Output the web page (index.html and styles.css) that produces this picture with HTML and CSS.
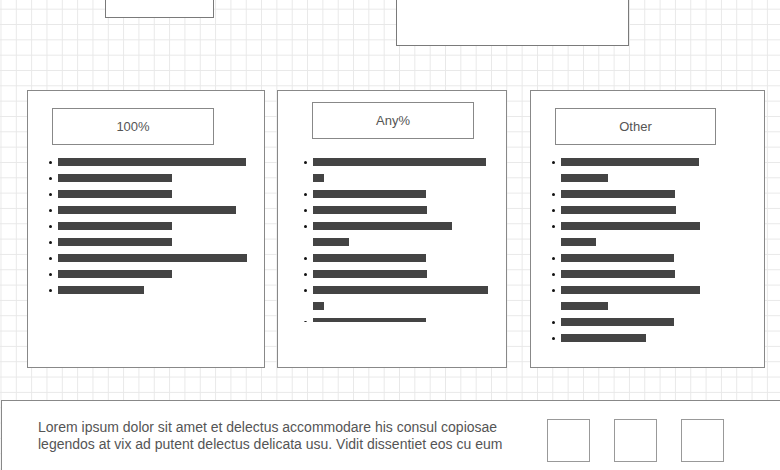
FILE: index.html
```html
<!DOCTYPE html>
<html lang="en">
<head>
<meta charset="utf-8">
<title>Wireframe</title>
<link rel="stylesheet" href="styles.css">
</head>
<body>
<div class="page">
  <div class="top-row">
    <div class="node node-a"></div>
    <div class="node node-b"></div>
  </div>

  <div class="cards">
    <section class="card card-1">
      <div class="card-title">100%</div>
      <ul class="bars">
        <li class="item"><span class="dot"></span><div class="lines"><span class="bar" style="width:188px"></span></div></li>
        <li class="item"><span class="dot"></span><div class="lines"><span class="bar" style="width:114px"></span></div></li>
        <li class="item"><span class="dot"></span><div class="lines"><span class="bar" style="width:114px"></span></div></li>
        <li class="item"><span class="dot"></span><div class="lines"><span class="bar" style="width:178px"></span></div></li>
        <li class="item"><span class="dot"></span><div class="lines"><span class="bar" style="width:114px"></span></div></li>
        <li class="item"><span class="dot"></span><div class="lines"><span class="bar" style="width:114px"></span></div></li>
        <li class="item"><span class="dot"></span><div class="lines"><span class="bar" style="width:189px"></span></div></li>
        <li class="item"><span class="dot"></span><div class="lines"><span class="bar" style="width:114px"></span></div></li>
        <li class="item"><span class="dot"></span><div class="lines"><span class="bar" style="width:86px"></span></div></li>
      </ul>
    </section>

    <section class="card card-2">
      <div class="card-title">Any%</div>
      <ul class="bars">
        <li class="item"><span class="dot"></span><div class="lines"><span class="bar" style="width:173px"></span><span class="bar" style="width:11px"></span></div></li>
        <li class="item"><span class="dot"></span><div class="lines"><span class="bar" style="width:113px"></span></div></li>
        <li class="item"><span class="dot"></span><div class="lines"><span class="bar" style="width:114px"></span></div></li>
        <li class="item"><span class="dot"></span><div class="lines"><span class="bar" style="width:139px"></span><span class="bar" style="width:36px"></span></div></li>
        <li class="item"><span class="dot"></span><div class="lines"><span class="bar" style="width:113px"></span></div></li>
        <li class="item"><span class="dot"></span><div class="lines"><span class="bar" style="width:114px"></span></div></li>
        <li class="item"><span class="dot"></span><div class="lines"><span class="bar" style="width:175px"></span><span class="bar" style="width:11px"></span></div></li>
        <li class="item"><span class="dot"></span><div class="lines"><span class="bar" style="width:113px"></span></div></li>
      </ul>
    </section>

    <section class="card card-3">
      <div class="card-title">Other</div>
      <ul class="bars">
        <li class="item"><span class="dot"></span><div class="lines"><span class="bar" style="width:138px"></span><span class="bar" style="width:47px"></span></div></li>
        <li class="item"><span class="dot"></span><div class="lines"><span class="bar" style="width:114px"></span></div></li>
        <li class="item"><span class="dot"></span><div class="lines"><span class="bar" style="width:115px"></span></div></li>
        <li class="item"><span class="dot"></span><div class="lines"><span class="bar" style="width:139px"></span><span class="bar" style="width:35px"></span></div></li>
        <li class="item"><span class="dot"></span><div class="lines"><span class="bar" style="width:113px"></span></div></li>
        <li class="item"><span class="dot"></span><div class="lines"><span class="bar" style="width:114px"></span></div></li>
        <li class="item"><span class="dot"></span><div class="lines"><span class="bar" style="width:139px"></span><span class="bar" style="width:47px"></span></div></li>
        <li class="item"><span class="dot"></span><div class="lines"><span class="bar" style="width:113px"></span></div></li>
        <li class="item"><span class="dot"></span><div class="lines"><span class="bar" style="width:85px"></span></div></li>
      </ul>
    </section>
  </div>

  <footer class="footer">
    <p class="footer-text">Lorem ipsum dolor sit amet et delectus accommodare his consul copiosae legendos at vix ad putent delectus delicata usu. Vidit dissentiet eos cu eum</p>
    <div class="squares">
      <div class="square"></div>
      <div class="square"></div>
      <div class="square"></div>
    </div>
  </footer>
</div>
</body>
</html>
```

FILE: styles.css
```css
* {
  box-sizing: border-box;
}

html, body {
  margin: 0;
  padding: 0;
}

body {
  width: 780px;
  height: 470px;
  overflow: hidden;
  font-family: "Liberation Sans", Arial, sans-serif;
  color: #555;
  background-color: #fff;
  background-image:
    linear-gradient(to right, #e8e8e8 1px, transparent 1px),
    linear-gradient(to bottom, #e8e8e8 1px, transparent 1px);
  background-size: 15.33px 15.33px;
  background-position: 0.5px 8.7px;
}

.page {
  width: 780px;
  height: 470px;
  overflow: hidden;
}

/* top partially visible boxes */
.top-row {
  display: flex;
  align-items: flex-start;
  height: 90px;
  padding-left: 105px;
}

.node {
  background: #fff;
  border: 1px solid #7a7a7a;
  margin-top: -40px;
}

.node-a {
  width: 109px;
  height: 58px;
}

.node-b {
  width: 233px;
  height: 86px;
  margin-left: 182px;
}

/* cards */
.cards {
  display: flex;
  align-items: flex-start;
  height: 310px;
}

.card {
  height: 278px;
  background: #fff;
  border: 1px solid #888;
  display: flex;
  flex-direction: column;
}

.card-1 {
  width: 238px;
  margin-left: 27px;
  padding: 17px 0 0 24px;
}

.card-2 {
  width: 230px;
  margin-left: 12px;
  padding: 11px 0 0 34px;
}

.card-3 {
  width: 235px;
  margin-left: 23px;
  padding: 17px 0 0 24px;
}

.card-title {
  width: 162px;
  height: 37px;
  border: 1px solid #888;
  display: flex;
  align-items: center;
  justify-content: center;
  font-size: 13px;
  color: #555;
}

.card-3 .card-title {
  width: 161px;
}

.bars {
  list-style: none;
  margin: 13px 0 0 -3px;
  padding: 0;
}

.card-2 .bars {
  margin-top: 19px;
  margin-left: -8px;
  height: 164px;
  overflow: hidden;
}

.card-3 .bars {
  margin-left: -3px;
}

.item {
  display: flex;
  align-items: flex-start;
  margin-bottom: 8px;
}

.dot {
  flex: none;
  width: 3px;
  height: 3px;
  margin-top: 2.5px;
  margin-right: 6px;
  border-radius: 50%;
  background: #111;
}

.lines {
  display: flex;
  flex-direction: column;
  gap: 8px;
}

.bar {
  display: block;
  height: 8px;
  background: #444;
}

/* footer */
.footer {
  display: flex;
  align-items: flex-start;
  width: 800px;
  height: 100px;
  margin-left: 1px;
  padding: 18px 0 0 36px;
  background: #fff;
  border: 1px solid #888;
}

.footer-text {
  margin: 0;
  width: 480px;
  font-size: 14px;
  line-height: 17px;
  color: #555;
}

.squares {
  display: flex;
  gap: 24px;
  margin-left: 29px;
}

.square {
  width: 43px;
  height: 43px;
  border: 1px solid #999;
}
```
